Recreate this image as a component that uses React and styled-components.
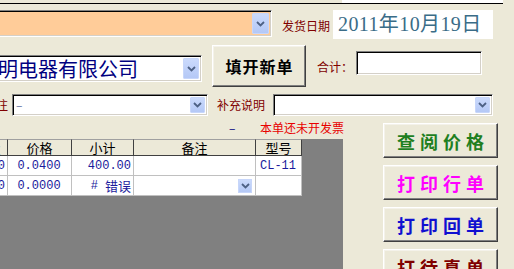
import React from "react";
import styled, { createGlobalStyle } from "styled-components";

const GlobalStyle = createGlobalStyle`
  html, body {
    margin: 0;
    padding: 0;
    background: #ece9d8;
  }
  * {
    box-sizing: border-box;
  }
`;

const CJK = `"Noto Sans CJK SC", "Noto Sans", sans-serif`;

const Screen = styled.div`
  width: 514px;
  height: 269px;
  overflow: hidden;
  background: #ece9d8;
  font-family: ${CJK};
`;

const TopStrip = styled.div`
  display: flex;
  height: 4px;
`;

const TopPiece = styled.div`
  width: ${(p) => p.$w}px;
  height: 4px;
  background: ${(p) => p.$bg};
  border-bottom: 1px solid #000;
`;

const Row = styled.div`
  display: flex;
  align-items: flex-start;
  height: ${(p) => p.$h}px;
  margin-top: ${(p) => p.$top}px;
`;

const Combo = styled.div`
  display: flex;
  align-items: stretch;
  width: ${(p) => p.$w}px;
  height: ${(p) => p.$h}px;
  margin-left: ${(p) => p.$ml || 0}px;
  margin-top: ${(p) => p.$mt || 0}px;
  background: ${(p) => p.$bg || "#fff"};
  border: 1px solid;
  border-color: #808080 #fff #fff #808080;
  box-shadow: inset 1px 1px 0 #000, inset -1px -1px 0 #d4d0c8;
  padding: 2px 2px 2px 1px;
  flex-shrink: 0;
`;

const ComboText = styled.div`
  flex: 1;
  overflow: hidden;
  white-space: nowrap;
  padding-left: ${(p) => p.$pl || 2}px;
  font-size: ${(p) => p.$size || 12}px;
  line-height: 1;
  color: ${(p) => p.$color || "#000080"};
  display: flex;
  align-items: center;
`;

const DropBtn = styled.div`
  width: ${(p) => p.$w || 16}px;
  flex-shrink: 0;
  display: flex;
  align-items: center;
  justify-content: center;
  background: linear-gradient(#cbdafc, #b4c8f6);
  border: 1px solid #c7d6fa;
  border-radius: 1px;
`;

const Chevron = () => (
  <svg width="9" height="6" viewBox="0 0 9 6">
    <polyline
      points="1,1 4.5,4.5 8,1"
      fill="none"
      stroke="#4d6185"
      strokeWidth="1.8"
    />
  </svg>
);

const Label = styled.div`
  font-size: 12px;
  line-height: 14px;
  color: ${(p) => p.$color || "#800000"};
  margin-left: ${(p) => p.$ml || 0}px;
  margin-top: ${(p) => p.$mt || 0}px;
  white-space: nowrap;
  flex-shrink: 0;
`;

const DateBox = styled.div`
  width: 160px;
  height: 29px;
  margin-left: 3px;
  background: #fff;
  padding-left: 5px;
  font-family: "Liberation Serif", "Noto Sans CJK SC", serif;
  font-size: 20px;
  letter-spacing: 0.4px;
  line-height: 29px;
  color: #3a6c87;
  white-space: nowrap;
`;

const RaisedButton = styled.div`
  display: flex;
  align-items: center;
  justify-content: center;
  width: ${(p) => p.$w}px;
  height: ${(p) => p.$h}px;
  margin-left: ${(p) => p.$ml || 0}px;
  background: #ece9d8;
  border: 1px solid;
  border-color: #fff #404040 #404040 #fff;
  box-shadow: inset -1px -1px 0 #808080, inset 1px 1px 0 #f4f2ea;
  font-family: ${CJK};
  font-weight: 700;
  font-size: ${(p) => p.$size || 16}px;
  letter-spacing: ${(p) => p.$ls || 0}px;
  padding-left: ${(p) => p.$ls || 0}px;
  color: ${(p) => p.$color || "#000"};
  white-space: nowrap;
  flex-shrink: 0;
`;

const TextInput = styled.div`
  width: 126px;
  height: 24px;
  margin-left: 3px;
  margin-top: 6px;
  background: #fff;
  border: 1px solid;
  border-color: #808080 #fff #fff #808080;
  box-shadow: inset 1px 1px 0 #000, inset -1px -1px 0 #d4d0c8;
`;

const Bottom = styled.div`
  display: flex;
  height: 153px;
`;

const LeftCol = styled.div`
  width: 343px;
  flex-shrink: 0;
  display: flex;
  flex-direction: column;
`;

const StatusLine = styled.div`
  height: 23px;
  display: flex;
  align-items: center;
  padding-left: 229px;
  font-size: 12px;
  white-space: nowrap;
`;

const Dash = styled.span`
  color: #000080;
  width: 31px;
  flex-shrink: 0;
`;

const Warn = styled.span`
  color: #e80000;
  flex-shrink: 0;
`;

const GridArea = styled.div`
  flex: 1;
  background: #808080;
  overflow: hidden;
`;

const Grid = styled.div`
  display: grid;
  grid-template-columns: 40px 64px 62px 122px 46px;
  grid-template-rows: 17px 20px 20px;
  width: 334px;
  margin-left: -32px;
`;

const HeadCell = styled.div`
  background: #ece9d8;
  border-right: 1px solid #404040;
  border-bottom: 1px solid #404040;
  border-top: 1px solid #a0a0a0;
  display: flex;
  align-items: center;
  justify-content: center;
  font-size: 13px;
  color: #000;
`;

const Cell = styled.div`
  background: #fff;
  border-right: 1px solid #c0c0c0;
  border-bottom: 1px solid #c0c0c0;
  display: flex;
  align-items: center;
  justify-content: ${(p) =>
    p.$align === "right" ? "flex-end" : p.$align === "left" ? "flex-start" : "center"};
  padding: 0 2px 0 1px;
  font-family: "Liberation Mono", "Noto Sans CJK SC", monospace;
  font-size: 12px;
  color: #1a1a9c;
  white-space: nowrap;
`;

const CellCjk = styled.span`
  font-family: ${CJK};
  font-size: 13px;
  margin-left: 7px;
`;

const CellDrop = styled.div`
  margin-left: auto;
  width: 14px;
  height: 14px;
  margin-right: 1px;
  display: flex;
  align-items: center;
  justify-content: center;
  background: linear-gradient(#cbdafc, #b4c8f6);
  border: 1px solid #c7d6fa;
`;

const SideCol = styled.div`
  display: flex;
  flex-direction: column;
  gap: 7px;
  margin-left: 40px;
  padding-top: 7px;
`;

export default function App() {
  return (
    <>
      <GlobalStyle />
      <Screen>
        <TopStrip>
          <TopPiece $w={342} $bg="#ece9d8" />
          <TopPiece $w={161} $bg="#fff" />
        </TopStrip>

        <Row $h={29} $top={6}>
          <Combo $w={302} $h={27} $ml={-30} $bg="#ffcc99">
            <ComboText />
            <DropBtn $w={17}>
              <Chevron />
            </DropBtn>
          </Combo>
          <Label $ml={10} $mt={9}>
            发货日期
          </Label>
          <DateBox>2011年10月19日</DateBox>
        </Row>

        <Row $h={42} $top={6}>
          <Combo $w={232} $h={27} $ml={-30} $mt={10}>
            <ComboText $size={20} $pl={26} $color="#000080">
              明电器有限公司
            </ComboText>
            <DropBtn>
              <Chevron />
            </DropBtn>
          </Combo>
          <RaisedButton $w={94} $h={42} $ml={10} $size={16} $ls={1}>
            填开新单
          </RaisedButton>
          <Label $ml={11} $mt={15}>
            合计：
          </Label>
          <TextInput />
        </Row>

        <Row $h={22} $top={7}>
          <Label $ml={-4} $mt={4}>
            注
          </Label>
          <Combo $w={196} $h={22} $ml={4}>
            <ComboText $color="#6070a0">–</ComboText>
            <DropBtn $w={15}>
              <Chevron />
            </DropBtn>
          </Combo>
          <Label $ml={9} $mt={4}>
            补充说明
          </Label>
          <Combo $w={220} $h={22} $ml={8}>
            <ComboText />
            <DropBtn $w={15}>
              <Chevron />
            </DropBtn>
          </Combo>
        </Row>

        <Bottom>
          <LeftCol>
            <StatusLine>
              <Dash>–</Dash>
              <Warn>本单还未开发票</Warn>
            </StatusLine>
            <GridArea>
              <Grid>
                <HeadCell>数量</HeadCell>
                <HeadCell>价格</HeadCell>
                <HeadCell>小计</HeadCell>
                <HeadCell>备注</HeadCell>
                <HeadCell>型号</HeadCell>

                <Cell $align="right">10000</Cell>
                <Cell>0.0400</Cell>
                <Cell $align="right">400.00</Cell>
                <Cell />
                <Cell>CL-11</Cell>

                <Cell $align="right">0</Cell>
                <Cell>0.0000</Cell>
                <Cell $align="right">
                  #<CellCjk>错误</CellCjk>
                </Cell>
                <Cell>
                  <CellDrop>
                    <Chevron />
                  </CellDrop>
                </Cell>
                <Cell />
              </Grid>
            </GridArea>
          </LeftCol>
          <SideCol>
            <RaisedButton $w={115} $h={35} $size={18} $ls={5} $color="#1f7f1f">
              查阅价格
            </RaisedButton>
            <RaisedButton $w={115} $h={35} $size={18} $ls={5} $color="#ff00ff">
              打印行单
            </RaisedButton>
            <RaisedButton $w={115} $h={35} $size={18} $ls={5} $color="#1010d0">
              打印回单
            </RaisedButton>
            <RaisedButton $w={115} $h={35} $size={18} $ls={5} $color="#800000">
              打待真单
            </RaisedButton>
          </SideCol>
        </Bottom>
      </Screen>
    </>
  );
}
